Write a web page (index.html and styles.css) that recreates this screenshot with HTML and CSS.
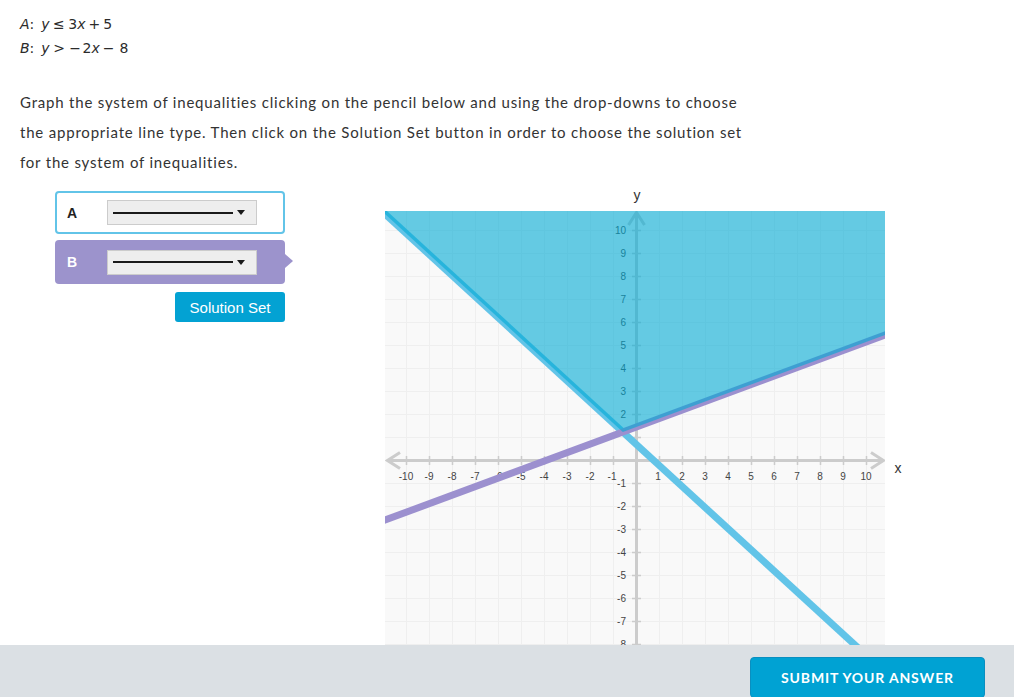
FILE: index.html
```html
<!DOCTYPE html>
<html>
<head>
<meta charset="utf-8">
<link rel="stylesheet" href="styles.css">
</head>
<body>
<main class="page">
  <div class="eqs">
    <div class="eq"><i>A</i>:<span class="sp"></span><i>y</i><span class="rel">≤</span>3<i>x</i><span class="bin">+</span>5</div>
    <div class="eq"><i>B</i>:<span class="sp"></span><i>y</i><span class="rel">&gt;</span><span class="neg">−</span>2<i>x</i><span class="bin wide">−</span>8</div>
  </div>
  <p class="prompt">Graph the system of inequalities clicking on the pencil below and using the drop-downs to choose<br>the appropriate line type. Then click on the Solution Set button in order to choose the solution set<br>for the system of inequalities.</p>
  <div class="workspace">
    <div class="controls">
      <div class="ineq ineq-a">
        <span class="ineq-label">A</span>
        <div class="select"><span class="select-line"></span><span class="caret"></span></div>
      </div>
      <div class="ineq ineq-b">
        <span class="ineq-label">B</span>
        <div class="select"><span class="select-line"></span><span class="caret"></span></div>
      </div>
      <div class="actions"><button class="solution">Solution Set</button></div>
    </div>
    <svg class="graph" width="530" height="530" viewBox="380 183 530 530">
      <defs>
        <clipPath id="plot"><rect x="385" y="211" width="500" height="500"/></clipPath>
      </defs>
      <rect x="385" y="211" width="500" height="500" fill="#f9f9f9"/>
      <g clip-path="url(#plot)">
        <path class="grid" d="M406.5 211V711M429.5 211V711M452.5 211V711M475.5 211V711M498.5 211V711M521.5 211V711M544.5 211V711M567.5 211V711M590.5 211V711M613.5 211V711M659.5 211V711M682.5 211V711M705.5 211V711M728.5 211V711M751.5 211V711M774.5 211V711M797.5 211V711M820.5 211V711M843.5 211V711M866.5 211V711M385 230.5H885M385 253.5H885M385 276.5H885M385 299.5H885M385 322.5H885M385 345.5H885M385 368.5H885M385 391.5H885M385 414.5H885M385 437.5H885M385 483.5H885M385 506.5H885M385 529.5H885M385 552.5H885M385 575.5H885M385 598.5H885M385 621.5H885M385 644.5H885M385 667.5H885M385 690.5H885"/>
        <path class="axis" d="M387 460.5H884M636.5 213V711"/>
        <path class="arrow" d="M400 452.5L387.5 460.5L400 468.5M871 452.5L883.5 460.5L871 468.5M628.5 225L636.5 212.5L644.5 225"/>
        <path class="tick" d="M406.5 456V465M429.5 456V465M452.5 456V465M475.5 456V465M498.5 456V465M521.5 456V465M544.5 456V465M567.5 456V465M590.5 456V465M613.5 456V465M659.5 456V465M682.5 456V465M705.5 456V465M728.5 456V465M751.5 456V465M774.5 456V465M797.5 456V465M820.5 456V465M843.5 456V465M866.5 456V465M632 230.5H641M632 253.5H641M632 276.5H641M632 299.5H641M632 322.5H641M632 345.5H641M632 368.5H641M632 391.5H641M632 414.5H641M632 437.5H641M632 483.5H641M632 506.5H641M632 529.5H641M632 552.5H641M632 575.5H641M632 598.5H641M632 621.5H641M632 644.5H641M632 667.5H641M632 690.5H641"/>
        <g class="xlabels">
          <text x="406" y="479.5">-10</text><text x="429" y="479.5">-9</text><text x="452" y="479.5">-8</text><text x="475" y="479.5">-7</text><text x="498" y="479.5">-6</text><text x="521" y="479.5">-5</text><text x="544" y="479.5">-4</text><text x="567" y="479.5">-3</text><text x="590" y="479.5">-2</text><text x="612" y="479.5">-1</text>
          <text x="658" y="479.5">1</text><text x="682" y="479.5">2</text><text x="705" y="479.5">3</text><text x="728" y="479.5">4</text><text x="751" y="479.5">5</text><text x="774" y="479.5">6</text><text x="797" y="479.5">7</text><text x="820" y="479.5">8</text><text x="843" y="479.5">9</text><text x="866" y="479.5">10</text>
        </g>
        <g class="ylabels">
          <text x="626" y="234">10</text><text x="626" y="257">9</text><text x="626" y="280">8</text><text x="626" y="303">7</text><text x="626" y="326">6</text><text x="626" y="349">5</text><text x="626" y="372">4</text><text x="626" y="395">3</text><text x="626" y="418">2</text>
          <text x="626" y="487">-1</text><text x="626" y="510">-2</text><text x="626" y="533">-3</text><text x="626" y="556">-4</text><text x="626" y="579">-5</text><text x="626" y="602">-6</text><text x="626" y="625">-7</text><text x="626" y="648">-8</text><text x="626" y="671">-9</text><text x="626" y="694">-10</text>
        </g>
        <path class="line-a" d="M380 209.4L900 686.2"/>
        <path class="line-b" d="M380 521.9L900 329.5"/>
        <polygon class="shade" points="385,211 885,211 885,335 622.8,432 385,214"/>
      </g>
      <text class="axis-name" x="637" y="200">y</text>
      <text class="axis-name" x="898" y="473">x</text>
    </svg>
  </div>
</main>
<footer class="footer">
  <button class="submit">SUBMIT YOUR ANSWER</button>
</footer>
</body>
</html>
```
FILE: styles.css
```css
html, body {
  margin: 0;
  padding: 0;
  background: #ffffff;
}

body {
  font-family: "Lato", "Open Sans", sans-serif;
  color: #333333;
  overflow: hidden;
}

.page {
  padding: 0 20px;
}

.eqs {
  padding-top: 12px;
  font-family: "DejaVu Sans", sans-serif;
  font-size: 14px;
  line-height: 24px;
  color: #2b2b2b;
}

.eq i {
  font-style: oblique;
}

.eq .sp {
  display: inline-block;
  width: 7px;
}

.eq .rel {
  margin: 0 3.5px;
}

.eq .bin {
  margin: 0 3px;
}

.eq .neg {
  margin: 0 1.5px 0 1px;
}

.eq .wide {
  margin-right: 5px;
}

.prompt {
  margin: 27px 0 0;
  font-size: 15px;
  line-height: 30px;
  letter-spacing: 0.8px;
  color: #333333;
  white-space: nowrap;
}

.workspace {
  display: flex;
  align-items: flex-start;
  margin-top: 6px;
  padding-left: 35px;
}

.controls {
  width: 230px;
  margin-top: 8px;
  display: flex;
  flex-direction: column;
  gap: 6px;
}

.ineq {
  position: relative;
  display: flex;
  align-items: center;
  box-sizing: border-box;
  border-radius: 4px;
  padding-left: 10px;
}

.ineq-a {
  height: 43px;
  border: 2px solid #62c4e8;
  background: #ffffff;
}

.ineq-b {
  height: 44px;
  padding-left: 12px;
  background: #9c93cc;
}

.ineq-b::after {
  content: "";
  position: absolute;
  right: -8px;
  top: 14px;
  border-left: 8px solid #9c93cc;
  border-top: 7px solid transparent;
  border-bottom: 7px solid transparent;
}

.ineq-label {
  width: 40px;
  font-family: "Liberation Sans", Arial, sans-serif;
  font-weight: bold;
  font-size: 14px;
  color: #222222;
}

.ineq-b .ineq-label {
  color: #ffffff;
}

.select {
  box-sizing: border-box;
  width: 150px;
  height: 25px;
  background: #eeeeee;
  border: 1px solid #cccccc;
  display: flex;
  align-items: center;
  padding-left: 5px;
  gap: 4px;
}

.select-line {
  width: 120px;
  height: 2px;
  background: #1a1a1a;
}

.caret {
  width: 0;
  height: 0;
  border-top: 5px solid #1a1a1a;
  border-left: 4px solid transparent;
  border-right: 4px solid transparent;
}

.actions {
  display: flex;
  justify-content: flex-end;
  margin-top: 2px;
}

.solution {
  width: 110px;
  height: 30px;
  border: none;
  border-radius: 3px;
  background: #03a2d3;
  color: #ffffff;
  font-family: "Liberation Sans", Arial, sans-serif;
  font-size: 15px;
  padding: 0;
}

.graph {
  display: block;
  margin-left: 95px;
  overflow: visible;
}

.grid {
  fill: none;
  stroke: #efefef;
  stroke-width: 1;
}

.axis {
  fill: none;
  stroke: #cccccc;
  stroke-width: 3;
}

.arrow {
  fill: none;
  stroke: #cccccc;
  stroke-width: 3;
}

.tick {
  fill: none;
  stroke: #cccccc;
  stroke-width: 1.5;
}

.xlabels text,
.ylabels text {
  font-family: "Liberation Sans", Arial, sans-serif;
  font-size: 10px;
  fill: #444444;
}

.xlabels text {
  text-anchor: middle;
}

.ylabels text {
  text-anchor: end;
}

.line-a {
  fill: none;
  stroke: #62c4e8;
  stroke-width: 7;
}

.line-b {
  fill: none;
  stroke: #9c90cf;
  stroke-width: 7;
}

.shade {
  fill: #00aad4;
  fill-opacity: 0.6;
}

.axis-name {
  font-family: "Liberation Sans", Arial, sans-serif;
  font-size: 14px;
  fill: #333333;
  text-anchor: middle;
}

.footer {
  position: fixed;
  left: 0;
  right: 0;
  bottom: 0;
  height: 52px;
  box-sizing: border-box;
  background: #dbe0e4;
  display: flex;
  justify-content: flex-end;
  align-items: flex-start;
  padding: 12px 29px 0 0;
}

.submit {
  width: 235px;
  height: 41px;
  box-sizing: border-box;
  border: 1px solid #0a8fc0;
  border-radius: 4px;
  background: #00a2d3;
  color: #ffffff;
  font-family: "Lato", sans-serif;
  font-weight: bold;
  font-size: 14px;
  letter-spacing: 0.85px;
  padding: 0 0 1px;
}
```
